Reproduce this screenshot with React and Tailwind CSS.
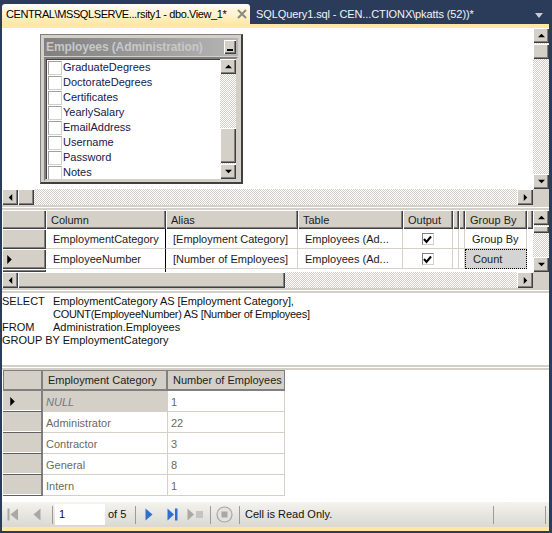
const bevel = "bg-[#d4d0c8] shadow-[inset_1px_1px_0_#ffffff,inset_-1px_-1px_0_#404040,inset_-2px_-2px_0_#808080]";
const hatch = "bg-[repeating-conic-gradient(#d4d0c8_0_25%,#ffffff_0_50%)] bg-[length:2px_2px]";
const font = "font-['Liberation_Sans',sans-serif] text-[11px]";

function Tri({ dir, size = 7, color = "#000", className = "" }) {
  const pts = { up: "0,6 8,6 4,2", down: "0,2 8,2 4,6", left: "6,0 6,8 2,4", right: "2,0 2,8 6,4" }[dir];
  return (
    <svg width={size} height={size} viewBox="0 0 8 8" className={className}>
      <polygon points={pts} fill={color} />
    </svg>
  );
}

function Btn({ dir, className = "" }) {
  return (
    <div className={`${bevel} flex items-center justify-center shrink-0 ${className}`}>
      <Tri dir={dir} />
    </div>
  );
}

function VScroll({ thumbTop = 0, thumbH = 15, className = "" }) {
  return (
    <div className={`w-[16px] shrink-0 flex flex-col ${className}`}>
      <Btn dir="up" className="h-[15px] w-full" />
      <div className={`flex-1 flex flex-col ${hatch}`}>
        <div className="shrink-0" style={{ height: thumbTop }} />
        <div className={`${bevel} w-full shrink-0`} style={{ height: thumbH }} />
      </div>
      <Btn dir="down" className="h-[15px] w-full" />
    </div>
  );
}

function HScroll({ thumb, corner = true }) {
  return (
    <div className="h-[16px] flex shrink-0">
      <Btn dir="left" className="w-[16px] h-full" />
      <div className={`flex-1 flex ${hatch}`}>
        <div className={`${bevel} h-full shrink-0`} style={{ width: thumb }} />
      </div>
      <Btn dir="right" className="w-[16px] h-full" />
      {corner && <div className="w-[16px] h-full bg-[#d4d0c8]" />}
    </div>
  );
}

function Splitter() {
  return <div className="h-[5px] shrink-0 bg-white border-y-2 border-[#d4d0c8]" />;
}

function TableBox() {
  const cols = ["GraduateDegrees", "DoctorateDegrees", "Certificates", "YearlySalary", "EmailAddress", "Username", "Password", "Notes"];
  return (
    <div className="w-[203px] h-[150px] ml-[38px] mt-[6px] p-[3px] flex flex-col bg-[#d4d0c8] border border-[#808080] border-r-2 border-b-2 border-r-[#404040] border-b-[#404040]">
      <div className="h-[18px] shrink-0 flex items-center justify-between bg-gradient-to-r from-[#808080] to-[#b5b5b5] pl-[2px] pr-[2px]">
        <span className="font-['Liberation_Sans',sans-serif] font-bold text-[12px] tracking-[-0.1px] text-[#c8c8c8] whitespace-nowrap">Employees (Administration)</span>
        <div className={`${bevel} w-[12px] h-[14px] flex items-end justify-center pb-[3px]`}>
          <div className="w-[6px] h-[2px] bg-black" />
        </div>
      </div>
      <div className="mt-[1px] h-[124px] flex bg-white border-2 border-t-[#808080] border-l-[#808080] border-r-[#d4d0c8] border-b-[#d4d0c8] shadow-[inset_1px_1px_0_#404040]">
        <div className="flex-1 pl-[2px] pt-[1px]">
          {cols.map((c) => (
            <div key={c} className="h-[15px] flex items-center gap-[1px]">
              <div className="w-[14px] h-[14px] bg-white border border-[#a0a0a0] border-b-[#d4d0c8] border-r-[#d4d0c8]" />
              <span className={`${font} text-[#14204a]`}>{c}</span>
            </div>
          ))}
        </div>
        <VScroll thumbTop={54} thumbH={35} className="h-[120px]" />
      </div>
    </div>
  );
}

function DiagramPane() {
  return (
    <div className="h-[177px] shrink-0 flex flex-col bg-white">
      <div className="flex-1 flex min-h-0">
        <div className="flex-1">
          <TableBox />
        </div>
        <VScroll thumbTop={1} thumbH={15} />
      </div>
      <HScroll thumb={16} />
    </div>
  );
}

const w = [44, 120, 132, 105, 50, 6, 6, 62, 6];

function HeadCell({ width, children, className = "" }) {
  return (
    <div style={{ width }} className={`${bevel} shrink-0 h-full flex items-center pl-[5px] pt-[1px] overflow-hidden text-[#1c1c1c] ${className}`}>
      {children}
    </div>
  );
}

function Cell({ width, children, className = "", pl = "pl-[7px]" }) {
  return (
    <div style={{ width }} className={`shrink-0 h-full flex items-center ${pl} pt-[1px] border-r border-b border-[#d4d0c8] text-[#1c1c1c] overflow-hidden whitespace-nowrap ${className}`}>
      {children}
    </div>
  );
}

function Check() {
  return (
    <div className="w-[12px] h-[12px] bg-white border border-[#808080] border-r-[#d4d0c8] border-b-[#d4d0c8] flex items-center justify-center mx-auto">
      <svg width="9" height="9" viewBox="0 0 9 9"><path d="M1 4 L3.5 7 L8 1.5" stroke="#000" strokeWidth="2" fill="none" /></svg>
    </div>
  );
}

function CriteriaRow({ cells, marker, last }) {
  return (
    <div className="h-[20px] flex shrink-0">
      <div style={{ width: w[0] }} className={`${bevel} shrink-0 flex items-center pl-[3px]`}>
        {marker && <Tri dir="right" size={9} />}
      </div>
      <Cell width={w[1]} className="border-r-black">{cells[0]}</Cell>
      <Cell width={w[2]}>{cells[1]}</Cell>
      <Cell width={w[3]}>{cells[2]}</Cell>
      <Cell width={w[4]} pl=""><Check /></Cell>
      <Cell width={w[5]} pl="" />
      <Cell width={w[6]} pl="" />
      <Cell width={w[7]} className={last ? "bg-[#d4d4d4] border border-dotted border-black" : ""}>{cells[3]}</Cell>
    </div>
  );
}

function CriteriaPane() {
  return (
    <div className={`h-[78px] shrink-0 flex flex-col bg-white ${font}`}>
      <div className="flex-1 flex min-h-0">
        <div className="flex-1 overflow-hidden">
          <div className="h-[19px] flex">
            <HeadCell width={w[0]} />
            <HeadCell width={w[1]}>Column</HeadCell>
            <HeadCell width={w[2]}>Alias</HeadCell>
            <HeadCell width={w[3]}>Table</HeadCell>
            <HeadCell width={w[4]}>Output</HeadCell>
            <HeadCell width={w[5]} />
            <HeadCell width={w[6]} />
            <HeadCell width={w[7]} className="whitespace-nowrap">Group By</HeadCell>
            <HeadCell width={w[8]} />
          </div>
          <CriteriaRow cells={["EmploymentCategory", "[Employment Category]", "Employees (Ad...", "Group By"]} />
          <CriteriaRow marker last cells={["EmployeeNumber", "[Number of Employees]", "Employees (Ad...", "Count"]} />
          <div className="h-[3px] flex">
            <div style={{ width: w[0] }} className={bevel} />
            <div style={{ width: w[1] }} className="border-r border-black" />
          </div>
        </div>
        <VScroll thumbTop={1} thumbH={7} />
      </div>
      <HScroll thumb={267} />
    </div>
  );
}

function SqlPane() {
  return (
    <div className={`h-[72px] shrink-0 bg-white pt-[2px] text-[#111] leading-[13px] ${font}`}>
      <div className="flex h-[13px]"><span className="w-[51px] shrink-0">SELECT</span><span className="whitespace-nowrap tracking-[-0.07px]">EmploymentCategory AS [Employment Category],</span></div>
      <div className="flex h-[13px]"><span className="w-[51px] shrink-0" /><span className="whitespace-nowrap tracking-[-0.28px]">COUNT(EmployeeNumber) AS [Number of Employees]</span></div>
      <div className="flex h-[13px]"><span className="w-[51px] shrink-0">FROM</span><span className="whitespace-nowrap">Administration.Employees</span></div>
      <div className="h-[13px] whitespace-nowrap">GROUP BY EmploymentCategory</div>
    </div>
  );
}

function ResultRow({ a, b, selected }) {
  return (
    <div className="h-[21px] flex">
      <div className="w-[40px] shrink-0 bg-[#d4d0c8] border-r-2 border-r-[#808080] border-b border-b-[#606060] shadow-[inset_0_-1px_0_#ffffff] flex items-center pl-[5px]">
        {selected && <Tri dir="right" size={9} />}
      </div>
      <div className={`w-[125px] shrink-0 flex items-center pl-[3px] pt-[2px] border-r border-b border-[#d4d0c8] ${selected ? "bg-[#d4d0c8] italic text-[#777]" : "text-[#6b6a5c]"}`}>{a}</div>
      <div className="w-[117px] shrink-0 flex items-center pl-[3px] pt-[2px] border-r border-b border-[#d4d0c8] text-[#6b6a5c]">{b}</div>
    </div>
  );
}

function ResultsPane() {
  return (
    <div className={`h-[132px] shrink-0 bg-white pl-[1px] ${font}`}>
      <div className="h-[21px] flex">
        <div className="w-[40px] shrink-0 bg-[#d4d0c8] border-t border-l border-[#808080] border-r-2 border-b-2" />
        <div className="w-[125px] shrink-0 bg-[#d4d0c8] border-t border-b-2 border-r-2 border-[#808080] flex items-center pl-[5px] text-[#222] whitespace-nowrap">Employment Category</div>
        <div className="w-[117px] shrink-0 bg-[#d4d0c8] border-t border-b-2 border-r border-[#808080] flex items-center pl-[5px] text-[#222] whitespace-nowrap">Number of Employees</div>
      </div>
      <ResultRow selected a="NULL" b="1" />
      <ResultRow a="Administrator" b="22" />
      <ResultRow a="Contractor" b="3" />
      <ResultRow a="General" b="8" />
      <ResultRow a="Intern" b="1" />
    </div>
  );
}

function Sep({ className = "" }) {
  return <div className={`w-[1px] h-[18px] bg-[#9a9a9a] shrink-0 ${className}`} />;
}

function Toolbar() {
  return (
    <div className={`h-[25px] shrink-0 flex items-center bg-gradient-to-b from-[#f4f3ef] to-[#dad8d1] text-[#111] ${font}`}>
      <svg width="12" height="13" viewBox="0 0 12 13" className="ml-[5px] shrink-0"><rect x="0.5" y="0.5" width="2" height="12" fill="#a8a8a4" /><polygon points="11,0.5 11,12.5 3.5,6.5" fill="#a8a8a4" /></svg>
      <svg width="8" height="13" viewBox="0 0 8 13" className="ml-[14px] shrink-0"><polygon points="7.5,0.5 7.5,12.5 0.5,6.5" fill="#a8a8a4" /></svg>
      <Sep className="ml-[11px]" />
      <div className="w-[50px] h-[21px] ml-[2px] bg-white flex items-center pl-[4px] shrink-0">1</div>
      <span className="ml-[3px] w-[27px] shrink-0">of 5</span>
      <Sep />
      <svg width="8" height="13" viewBox="0 0 8 13" className="ml-[9px] shrink-0"><polygon points="0.5,0.5 0.5,12.5 7.5,6.5" fill="#2f6fd0" /></svg>
      <svg width="11" height="13" viewBox="0 0 11 13" className="ml-[14px] shrink-0"><polygon points="0.5,0.5 0.5,12.5 7,6.5" fill="#2f6fd0" /><rect x="8" y="0.5" width="2.5" height="12" fill="#2f6fd0" /></svg>
      <svg width="17" height="13" viewBox="0 0 17 13" className="ml-[9px] shrink-0"><polygon points="0.5,0.5 0.5,12.5 7,6.5" fill="#a8a8a4" /><rect x="9" y="3" width="7" height="7" fill="#c4c4c0" /></svg>
      <Sep className="ml-[6px]" />
      <svg width="17" height="17" viewBox="0 0 17 17" className="ml-[5px] shrink-0"><circle cx="8.5" cy="8.5" r="7.5" fill="#e4e3de" stroke="#a8a8a4" strokeWidth="1.2" /><rect x="5.5" y="5.5" width="6" height="6" fill="#a8a8a4" /></svg>
      <Sep className="ml-[6px]" />
      <span className="ml-[5px] w-[248px] shrink-0">Cell is Read Only.</span>
      <Sep />
      <div className="w-[51px] shrink-0" />
      <Sep />
    </div>
  );
}

function Tabs() {
  return (
    <div className="h-[24px] shrink-0 pt-[4px] flex pr-[6px]">
      <div className={`w-[248px] shrink-0 rounded-t-[3px] bg-gradient-to-b from-[#fffdf6] to-[#ffe8a6] flex items-center pl-[4px] text-black ${font}`}>
        <span className="flex-1 whitespace-nowrap tracking-[-0.4px]">CENTRAL\MSSQLSERVE...rsity1 - dbo.View_1*</span>
        <svg width="10" height="10" viewBox="0 0 10 10" className="mr-[3px] shrink-0"><path d="M1 1 L9 9 M9 1 L1 9" stroke="#8a8a80" strokeWidth="2" /></svg>
      </div>
      <span className={`ml-[6px] flex-1 flex items-center whitespace-nowrap tracking-[-0.1px] text-[#f2f4f8] ${font}`}>SQLQuery1.sql - CEN...CTIONX\pkatts (52))*</span>
      <svg width="8" height="5" viewBox="0 0 8 5" className="self-center mt-[3px]"><polygon points="0,0 8,0 4,5" fill="#c5ccd8" /></svg>
    </div>
  );
}

export default function App() {
  return (
    <div className="w-[552px] h-[533px] overflow-hidden flex flex-col pl-[2px] pr-[3px] bg-[#2b3b5a]">
      <Tabs />
      <div className="h-[4px] shrink-0 bg-[#ffe8a6]" />
      <DiagramPane />
      <Splitter />
      <CriteriaPane />
      <Splitter />
      <SqlPane />
      <Splitter />
      <ResultsPane />
      <Toolbar />
      <div className="h-[4px] shrink-0 bg-[#ffe8a6]" />
    </div>
  );
}
